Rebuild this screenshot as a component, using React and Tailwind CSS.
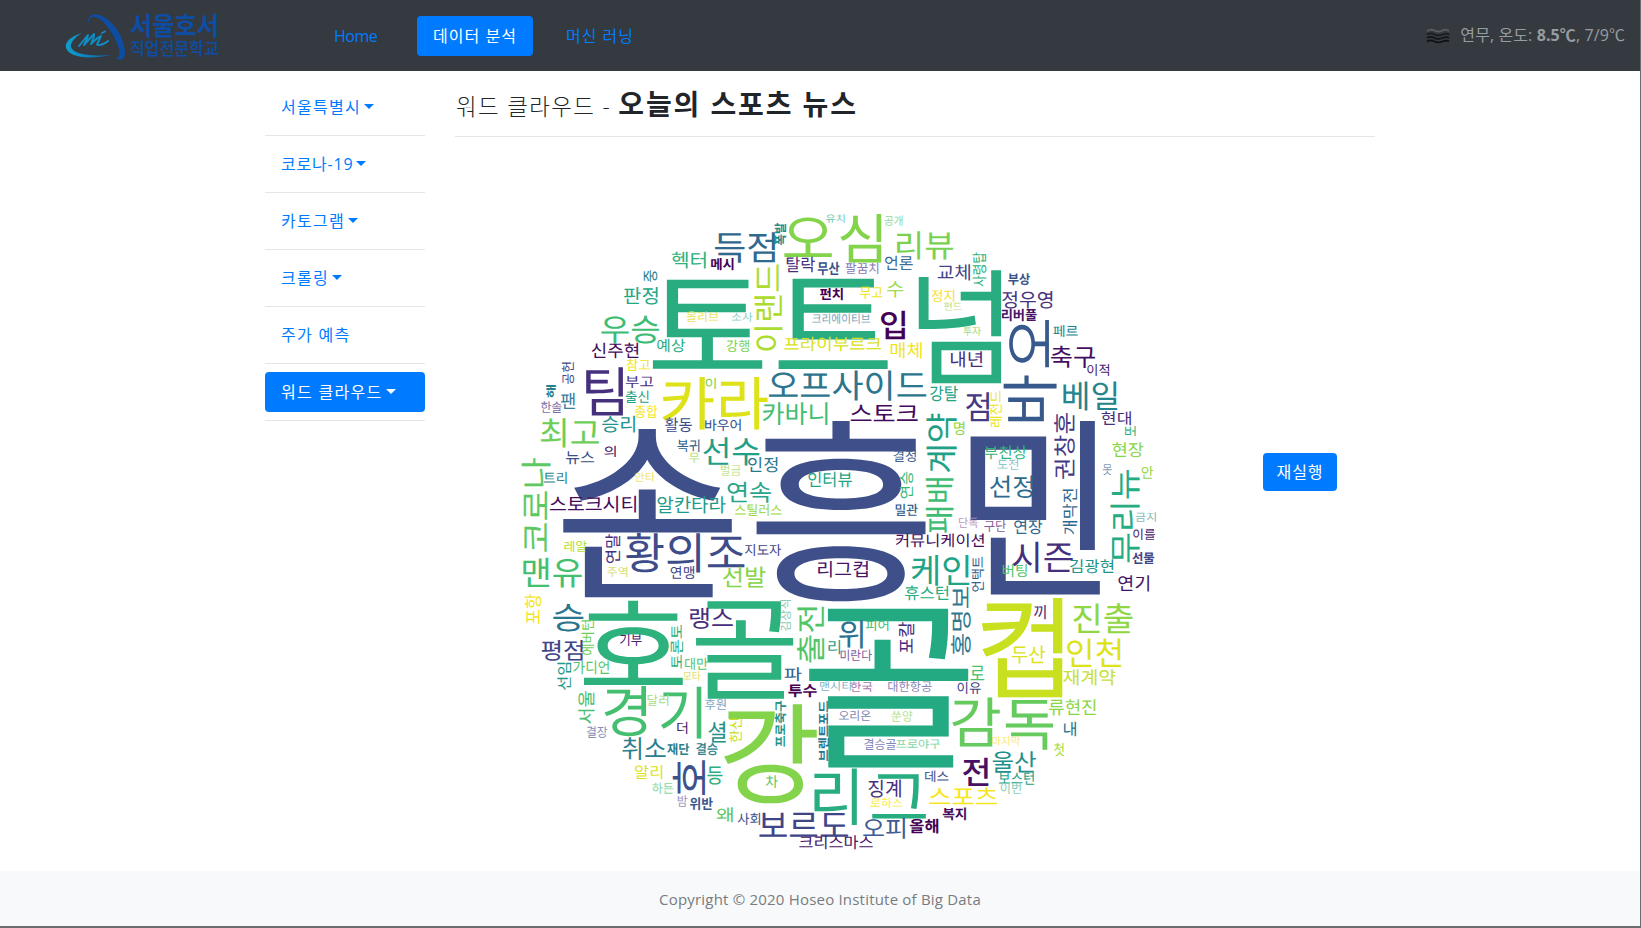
import React from "react";

const KR = '"Noto Sans CJK KR", sans-serif';

// [text, left, top, right, bottom, colour, flags]  flags: r = rotated, b = bold, m = medium
const WORDS = [
  ["손", 563.3, 427.5, 732, 597.7, "#3e4f8a"],
  ["흥", 756.5, 419, 926, 603.7, "#3e4f8a"],
  ["민", 969.3, 420, 1100, 594.7, "#3e4f8a"],
  ["토", 653, 279, 762.3, 369.3, "#29ad80"],
  ["트", 778.7, 279, 887.7, 369.3, "#29ad80"],
  ["넘", 918.3, 269, 1001.7, 384.3, "#29ad80"],
  ["호", 584, 600, 682.7, 686, "#2db27d"],
  ["골", 696, 600, 793.7, 699, "#2db27d"],
  ["골", 809, 606.7, 969, 767.7, "#24aa83"],
  ["컵", 981, 597.7, 1063, 697.7, "#c8e020"],
  ["강", 724, 704, 817.3, 804, "#84d44b"],
  ["경", 604.3, 686, 646.3, 736.7, "#44bf70"],
  ["기", 661, 686, 701.7, 739, "#44bf70"],
  ["오", 784.3, 217.3, 831.7, 257.3, "#84d44b"],
  ["심", 840, 213.3, 881.7, 263, "#84d44b"],
  ["리뷰", 897, 231, 953, 260, "#7ad151"],
  ["득점", 715, 232, 775, 263, "#31688e"],
  ["폭발", 774, 223, 786, 245, "#1f8a8c", "rb"],
  ["유치", 826, 214, 844.5, 222.7, "#74c7b0"],
  ["공개", 884.5, 215, 902.5, 225.7, "#8fd9a0"],
  ["헥터", 671.7, 251.7, 705.7, 269, "#2db27d"],
  ["메시", 711, 257.5, 733.5, 270, "#440154", "b"],
  ["중", 644, 270, 657.5, 281.7, "#2f7f8e", "r"],
  ["판정", 624, 287.3, 657.5, 305, "#23a884"],
  ["우승", 601, 315, 659, 343.3, "#3dbc74"],
  ["올리브", 686.7, 311, 718.3, 321.7, "#e8e35c"],
  ["예상", 657.3, 339, 685, 352.7, "#27ad81"],
  ["신주현", 591.7, 342.3, 638.3, 358.5, "#440a5c"],
  ["참고", 626.7, 358.3, 650, 370.7, "#f0e51d"],
  ["팀", 586, 366.7, 623.3, 416, "#46307e"],
  ["부고", 625.7, 376, 653.3, 388.5, "#472f7d"],
  ["출신", 625.7, 390.5, 648.5, 403.3, "#22a385"],
  ["종합", 635, 405, 657.5, 418.3, "#f5e626"],
  ["카", 662, 376, 713.5, 430, "#dde318"],
  ["라", 720.7, 376, 768, 430, "#dde318"],
  ["이", 705.7, 377.7, 715.7, 389, "#7ad151"],
  ["공헌", 561.7, 362.3, 574, 384, "#3f4a8a", "r"],
  ["해", 546, 385, 556, 397.7, "#26828e", "rb"],
  ["팬", 561, 392.7, 575, 409.3, "#3b7e9a"],
  ["한솔", 541, 401.7, 561.7, 413.3, "#7b6aa3"],
  ["이랜드", 754.3, 264.3, 783.3, 350.7, "#addc30", "r"],
  ["탈락", 786.7, 256.7, 815, 272.7, "#472d7b"],
  ["무산", 817.7, 261, 839.3, 275, "#3b518b", "b"],
  ["팔꿈치", 845.7, 262.3, 878.3, 274, "#8d7bb5"],
  ["언론", 885, 255.7, 912.7, 270, "#3a6d98"],
  ["수", 887.3, 281, 903.3, 297.7, "#a0da55"],
  ["펀치", 820, 288.3, 842.7, 300.7, "#440154", "b"],
  ["무고", 860, 286.7, 882.3, 299.3, "#f0e51d"],
  ["크리에이티브", 812.3, 313.3, 870, 324, "#7c9fbc"],
  ["소사", 731.7, 311.7, 752.7, 321.7, "#8fcfbf"],
  ["입", 881, 311, 905, 340, "#440154", "m"],
  ["강행", 726.7, 339.3, 749, 351.7, "#7ad151"],
  ["프라이부르크", 784.3, 336.7, 881, 351.7, "#d8e219"],
  ["매체", 890.7, 341.7, 921.7, 358.3, "#f0e51d"],
  ["오프사이드", 769, 370, 926, 401, "#2b758e"],
  ["카바니", 762.7, 401.7, 827.3, 425, "#41be71"],
  ["스토크", 850.7, 405, 917.7, 421.7, "#440a5c"],
  ["정지", 931.7, 289.3, 954.3, 302.3, "#f4e23a"],
  ["강탈", 930, 385, 957.7, 401, "#22a385"],
  ["계약", 926, 413.5, 957, 472.5, "#1fa187", "r"],
  ["명", 954, 421, 964.3, 435, "#90d743"],
  ["교체", 937.7, 264.3, 970, 281, "#414487"],
  ["사령탑", 972.7, 252.3, 986.7, 286.7, "#2db27d", "r"],
  ["부상", 1008.3, 272.7, 1030, 285, "#3a528b", "b"],
  ["정우영", 1002.3, 291, 1052.3, 309, "#463480"],
  ["리버풀", 1001.7, 308.3, 1036.7, 321, "#481467", "b"],
  ["펀드", 944, 302.3, 961.7, 311, "#c5dd80"],
  ["투자", 963.3, 326, 981, 335.7, "#a5d98a"],
  ["오", 1009, 320, 1049.3, 367.3, "#38598c", "r"],
  ["바", 1003.3, 375, 1057.7, 421.7, "#38598c", "r"],
  ["점", 966, 392.7, 989, 421.7, "#443983"],
  ["레전드", 990, 391, 1002.7, 427, "#ece51b", "r"],
  ["내년", 951, 351, 982.3, 367.7, "#46327e"],
  ["페르", 1053.3, 325, 1077.7, 337.3, "#26828e"],
  ["축구", 1051, 345, 1095, 367.7, "#440f62"],
  ["이적", 1087.3, 363.3, 1109, 375.7, "#481b6d"],
  ["베일", 1063.3, 381, 1117.3, 410.7, "#25848e"],
  ["현대", 1101.7, 410.7, 1130.7, 425, "#46307e"],
  ["권창훈", 1054, 413, 1075, 479, "#443a83", "r"],
  ["최고", 540.7, 418.3, 599, 448.3, "#6ece58"],
  ["승리", 602.3, 415.7, 635, 433, "#1f948c"],
  ["활동", 665, 417.7, 691.7, 432.7, "#3e4989"],
  ["바우어", 705, 418.7, 740.7, 431, "#31508b"],
  ["뉴스", 566, 450.7, 594, 464, "#3b5187"],
  ["의", 604.3, 445.7, 615.7, 457.3, "#471365"],
  ["복귀", 677.3, 439.3, 699.3, 452.3, "#2c5f8a"],
  ["무", 689.3, 452.3, 699.3, 462.7, "#b4e07a"],
  ["선수", 703.3, 436.7, 759.3, 465.7, "#1fa088"],
  ["안타", 635, 472.3, 655, 482.3, "#eee36a"],
  ["트리", 544, 471.7, 566.7, 484.3, "#2b7f8e"],
  ["코로나", 521, 458.3, 550.7, 551.7, "#5ec962", "r"],
  ["스토크시티", 550, 495, 636, 512.3, "#440a5c"],
  ["알칸타라", 657.3, 495.7, 725.7, 513.3, "#1e9c89"],
  ["연속", 727.5, 481, 771, 502.7, "#29a587"],
  ["벌금", 720.7, 464, 740.7, 475.7, "#c2e59a"],
  ["인정", 748.3, 456.7, 777.3, 472.3, "#2a788e"],
  ["스틸러스", 735, 503.3, 781.7, 515.7, "#9bd93c"],
  ["황의조", 626, 532.7, 744.3, 573, "#3e4c8a"],
  ["연말", 605, 534.3, 620, 563.3, "#46307e", "r"],
  ["레알", 564.3, 540.7, 586.7, 552.3, "#b5de2b"],
  ["주역", 607.3, 566.7, 627.3, 577.3, "#d8e070"],
  ["연맹", 670.7, 565.7, 694, 579, "#404688"],
  ["맨유", 523.3, 557.7, 581.7, 588.3, "#44bf70"],
  ["포항", 525, 594, 541.7, 624, "#f3e51e", "r"],
  ["승", 553.3, 603.3, 583.3, 631, "#2a768e"],
  ["에버턴", 581, 620, 594, 655, "#6ece58", "r"],
  ["랭스", 690, 607.7, 732.7, 629, "#472d7b"],
  ["토론토", 671, 625, 683.3, 668.5, "#29af7f", "r"],
  ["선발", 723, 566.7, 765.7, 588, "#86d549"],
  ["지도자", 745, 543.3, 781, 555.7, "#3f4788"],
  ["기부", 620, 634, 641.7, 646.7, "#482374"],
  ["인터뷰", 808.3, 471.7, 851.7, 487.7, "#21a585"],
  ["리그컵", 818.3, 560.7, 867.7, 577.7, "#471365"],
  ["결정", 893.3, 449.3, 915.7, 461.7, "#3f6292"],
  ["연승", 899, 471.7, 912.7, 498.3, "#37b878", "r"],
  ["밀관", 895.7, 503.3, 917.7, 515.7, "#34618d", "m"],
  ["패배", 925.7, 478.3, 954, 532.7, "#3fbc73", "r"],
  ["커뮤니케이션", 895.7, 533.3, 984, 547.5, "#450c5c"],
  ["케인", 911.7, 554.3, 969.3, 585.7, "#20a386"],
  ["휴스턴", 905, 585, 948.3, 600, "#28ae80"],
  ["김상식", 780, 600, 791, 631, "#8cc9b4", "r"],
  ["출전", 796.7, 606.7, 824.3, 662.7, "#52c569", "r"],
  ["위", 839, 620, 863, 649, "#2c728e"],
  ["피어", 865.7, 619.3, 888.3, 631, "#3fbf71"],
  ["포칼", 898, 622, 914, 653, "#472d7b", "r"],
  ["리", 828.3, 639.3, 840, 654, "#2a9d8a"],
  ["미란다", 840.7, 649, 871.7, 660.7, "#7d5c9c"],
  ["파", 784.3, 667.3, 801.7, 681.7, "#34618d"],
  ["투수", 788.3, 684, 816.7, 697.3, "#440154", "b"],
  ["맨시티", 820, 681, 851, 691, "#86b4c4"],
  ["한국", 850.7, 681, 872.3, 691.7, "#a878a8"],
  ["대한항공", 888.3, 681, 931.7, 692.3, "#8a86b8"],
  ["오리온", 839, 710, 870.7, 721, "#7e86ae"],
  ["쑨양", 891.7, 710, 912.3, 721.7, "#b5e08a"],
  ["결승골", 864.3, 738.3, 896, 750, "#7f86b8"],
  ["프로야구", 896, 739, 940, 749.3, "#7fd6a5"],
  ["프로축구", 775, 700.7, 786.7, 746.7, "#1f948c", "rb"],
  ["브렌트포드", 818.3, 701, 829.3, 761, "#2a768e", "rb"],
  ["한신", 729, 718.3, 741.7, 742.3, "#c8e020", "r"],
  ["차", 765.7, 775, 777.7, 788.3, "#5cc863"],
  ["리", 814.3, 767.7, 857.3, 825.7, "#27ad81"],
  ["그", 872.3, 773.3, 926, 818.3, "#27ad81"],
  ["징계", 868.3, 779.3, 900.7, 797.7, "#472f7d"],
  ["로하스", 870.7, 797.3, 902.3, 807.7, "#fbe94d"],
  ["데스", 925, 770, 948.3, 781.7, "#3f4f8a"],
  ["보르도", 759.3, 812.7, 848, 837.3, "#404588"],
  ["오피", 863.3, 817.7, 905, 839.3, "#3f5c94"],
  ["올해", 910, 819, 938.3, 834, "#440154", "b"],
  ["크리스마스", 799.3, 835, 872.7, 849.3, "#471567"],
  ["사회", 737.7, 812.3, 760, 825, "#3c4f8a"],
  ["왜", 716.7, 807.3, 732.7, 822.7, "#5ec962"],
  ["부친상", 984.3, 445, 1026.7, 459, "#2fb47c"],
  ["도전", 997.7, 459, 1018.3, 470, "#8ac5c8"],
  ["선정", 990, 475, 1032.7, 497.7, "#2f6b8e"],
  ["개막전", 1062.7, 489, 1077.7, 534.3, "#31688e", "r"],
  ["또", 1125, 426, 1135.7, 436, "#2db27d", "r"],
  ["현장", 1112.7, 442.3, 1143.3, 457.7, "#86d549"],
  ["못", 1102.7, 464.3, 1111.7, 475, "#8a9bbb"],
  ["안", 1141.7, 466, 1153.3, 479, "#90d743"],
  ["무리뉴", 1110, 470, 1140, 562.7, "#25ac82", "r"],
  ["금지", 1135.7, 511.7, 1155.7, 521.7, "#86b8b8"],
  ["이를", 1133.3, 528.3, 1155, 540, "#481b6d"],
  ["선물", 1132.3, 551.7, 1154.3, 564, "#414487", "b"],
  ["연기", 1118.3, 575, 1149, 591.7, "#471365"],
  ["김광현", 1070, 559, 1113.3, 573.3, "#1f948c"],
  ["시즌", 1012.3, 541.7, 1072.7, 572.7, "#46307e"],
  ["연장", 1014.3, 519, 1042.3, 534, "#31688e"],
  ["구단", 984.3, 520, 1006, 532.3, "#8c5a95"],
  ["단독", 959, 517.3, 977.7, 528.3, "#b795bb"],
  ["버팅", 1002.7, 564.3, 1026.7, 577.7, "#52c569"],
  ["언택트", 971, 556.7, 984, 591.7, "#34618d", "r"],
  ["홍명보", 951, 587, 971, 655, "#31788e", "r"],
  ["끼", 1034, 604.3, 1045.7, 619, "#482878"],
  ["진출", 1073.3, 602.7, 1132.7, 633.3, "#90d743"],
  ["인천", 1067.3, 638.3, 1121, 667.3, "#dde318"],
  ["두산", 1011.7, 645.7, 1045, 664, "#dde318"],
  ["재계약", 1063.3, 669, 1115.7, 685.7, "#c5e03c"],
  ["류현진", 1049, 699.3, 1095.7, 716, "#8bd646"],
  ["내", 1064, 721.7, 1076, 736.7, "#2a788e"],
  ["첫", 1054, 742.3, 1064, 755.7, "#a5db36"],
  ["감", 951.7, 697.3, 1000, 747.3, "#65cb5e"],
  ["독", 1006, 699.3, 1053.3, 750, "#65cb5e"],
  ["마지막", 992.3, 736, 1020, 746, "#fbe77a"],
  ["로", 970.7, 666, 984.3, 680.7, "#4ac16d"],
  ["이유", 957.7, 681.7, 980.7, 694.3, "#404688"],
  ["전", 962.7, 757.3, 988.3, 786, "#471063", "m"],
  ["울산", 992.7, 751, 1036, 772.7, "#22918c"],
  ["보스턴", 999, 771.7, 1034, 785, "#1fa187"],
  ["이번", 1000.7, 781.7, 1021, 794, "#8ad0b8"],
  ["스포츠", 929.3, 786.7, 997.3, 804, "#f5e61f"],
  ["복지", 942.7, 807.7, 966, 820.7, "#440a5c", "b"],
  ["평점", 541.7, 640, 582.7, 661, "#414487"],
  ["선임", 556.7, 662.7, 570.7, 690, "#1f9a8a", "r"],
  ["가디언", 573.3, 660, 609, 674, "#54c568"],
  ["서울", 577.7, 691, 594.3, 724, "#47c06f", "r"],
  ["결장", 586.7, 725.7, 607.3, 737.7, "#8590b8"],
  ["달러", 647.7, 694.3, 668.3, 706, "#a5dc7f"],
  ["더", 677.3, 721.7, 687.3, 734.3, "#471b6d"],
  ["대만", 685, 657.3, 707.7, 670, "#54c568"],
  ["모타", 683.3, 670.7, 700.7, 680.7, "#e0e070"],
  ["후원", 705, 698.3, 726, 710, "#7fa5be"],
  ["셜", 708.3, 721, 725.7, 742.3, "#22908c"],
  ["취소", 622.3, 736.7, 665.7, 760, "#2b808e"],
  ["재단", 667.3, 742.7, 689.3, 755, "#2a818e", "b"],
  ["결승", 696, 742.3, 717.7, 755, "#2b808e", "m"],
  ["알리", 635, 764.3, 662.3, 779, "#dde318"],
  ["하든", 652.3, 782.7, 673.3, 794.3, "#7fd6a0"],
  ["호", 672.3, 760, 705, 795, "#3b528b", "r"],
  ["등", 707.3, 766.7, 722.3, 785, "#28ae80"],
  ["밤", 677.7, 795, 687.3, 806.7, "#9a93bf"],
  ["위반", 690, 796.7, 712.7, 810, "#3a5a8c", "b"],
];

let ctx;
function inkBox(text, weight) {
  ctx = ctx || document.createElement("canvas").getContext("2d");
  ctx.font = `${weight} 100px ${KR}`;
  const m = ctx.measureText(text);
  return {
    l: -m.actualBoundingBoxLeft,
    r: m.actualBoundingBoxRight,
    t: -m.actualBoundingBoxAscent,
    b: m.actualBoundingBoxDescent,
  };
}

function Word({ word }) {
  const [text, x0, y0, x1, y1, color, flags = ""] = word;
  const weight = flags.includes("b") ? 700 : flags.includes("m") ? 500 : 400;
  const k = inkBox(text, weight);
  const w = k.r - k.l;
  const h = k.b - k.t;
  const transform = flags.includes("r")
    ? `translate(${x0} ${y1}) rotate(-90) scale(${(y1 - y0) / w} ${(x1 - x0) / h}) translate(${-k.l} ${-k.t})`
    : `translate(${x0} ${y0}) scale(${(x1 - x0) / w} ${(y1 - y0) / h}) translate(${-k.l} ${-k.t})`;
  return (
    <text transform={transform} fill={color} fontSize="100" fontWeight={weight} fontFamily={KR}>
      {text}
    </text>
  );
}

function WordCloud() {
  return (
    <svg className="block h-[650px] w-[645px] overflow-visible" viewBox="515 205 645 650" textRendering="geometricPrecision">
      {WORDS.map((w, i) => (
        <Word key={i} word={w} />
      ))}
    </svg>
  );
}

function Logo() {
  return (
    <svg className="h-[50px] w-[156px] overflow-visible" viewBox="64 10 156 50">
      <defs>
        <linearGradient id="swoosh" x1="0" x2="1">
          <stop offset="0" stopColor="#0f9fd0" />
          <stop offset="1" stopColor="#0e5fa8" />
        </linearGradient>
      </defs>
      <path d="M88.500 25C86 17 92 12 101 15.500C114 21 125 39 125 53C125 59 121 61 116 58.500C120 57.500 120 52 118 46C114 34 105 21 97 17.500C91 15.500 88 18 88.500 25Z" fill="#0d4da3" />
      <path d="M82 33C71 36 65 42 66 47.500C68 56 84 60.500 112 55C97 56 74 56 71 47C70 43 75 37 82 33Z" fill="url(#swoosh)" />
      <path d="M79 46L88 35C88 38 85 42 84 45L94 34C95 36 92 41 91 44C95 40 98 37 101 36L97 44.500C99 46 104 44 108 41M102 33L105 31.500" fill="none" stroke="#0f8cc4" strokeWidth="1.900" strokeLinejoin="round" strokeLinecap="round" />
      <text x="130" y="34.500" textLength="89" lengthAdjust="spacingAndGlyphs" fontSize="25" fontWeight="700" fontFamily={KR} fill="#0d4da3">서울호서</text>
      <text x="130" y="54.500" textLength="89" lengthAdjust="spacingAndGlyphs" fontSize="17" fontWeight="500" fontFamily={KR} fill="#0d4da3">직업전문학교</text>
    </svg>
  );
}

function HazeIcon() {
  return (
    <svg className="h-[16px] w-[24px]" viewBox="0 0 24 16" fill="none" strokeWidth="1.800">
      <path d="M1 3C4 1 6 1 8.500 2.500S14 4 16.500 2.500S21 1.500 23 3" stroke="#5d5d60" />
      <path d="M1 6.500C4 4.500 6 5 8.500 6.500S14 7.500 16.500 6.500S21 5 23 6.500" stroke="#1b1c1e" />
      <path d="M1 10C4 8 6 8.500 8.500 10S14 11 16.500 10S21 8.500 23 10" stroke="#141516" />
      <path d="M1 13.500C4 11.500 6 12 8.500 13.500S14 14.500 16.500 13.500S21 12 23 13.500" stroke="#101112" />
    </svg>
  );
}

const MENU = [
  ["서울특별시", true],
  ["코로나-19", true],
  ["카토그램", true],
  ["크롤링", true],
  ["주가 예측", false],
  ["워드 클라우드", true, true],
];

function Caret() {
  return <span className="mb-px ml-[3px] border-x-[5px] border-t-[5px] border-x-transparent border-t-current" />;
}

export default function App() {
  return (
    <div className="flex h-[928px] w-[1641px] flex-col overflow-hidden border-r border-b-2 border-[#6b6d70] bg-white font-['Open_Sans','Noto_Sans_CJK_KR',sans-serif] text-base text-[#212529]">
      <header className="flex h-[71px] shrink-0 items-center bg-[#343a40]">
        <div className="ml-[64px] -mt-px">
          <Logo />
        </div>
        <nav className="ml-[98px] flex items-center text-[#007bff]">
          <a className="flex h-10 w-[99px] items-center px-4 tracking-[-0.5px]">Home</a>
          <a className="flex h-10 w-[116px] items-center justify-center rounded bg-[#007bff] tracking-[1px] text-white whitespace-nowrap">데이터 분석</a>
          <a className="ml-[17px] flex h-10 items-center px-4 tracking-[1px] whitespace-nowrap">머신 러닝</a>
        </nav>
        <div className="mr-[15px] ml-auto flex items-center text-[#999c9f]">
          <HazeIcon />
          <span className="-mt-[2px] ml-[10px] text-[16px] tracking-[0.1px] whitespace-nowrap">
            연무, 온도: <b>8.5℃</b>, 7/9℃
          </span>
        </div>
      </header>

      <div className="flex h-[800px] shrink-0">
        <aside className="ml-[265px] w-[160px] pt-4">
          {MENU.map(([label, caret, active]) => (
            <div key={label} className="mb-2 border-b border-[#e5e5e5] pb-2">
              <a
                className={
                  active
                    ? "flex h-10 items-center rounded bg-[#007bff] px-4 tracking-[1.3px] whitespace-nowrap text-white"
                    : label === "코로나-19"
                      ? "flex h-10 items-center px-4 tracking-[0.8px] whitespace-nowrap text-[#007bff]"
                      : "flex h-10 items-center px-4 tracking-[1.3px] whitespace-nowrap text-[#007bff]"
                }
              >
                {label}
                {caret && <Caret />}
              </a>
            </div>
          ))}
        </aside>

        <main className="ml-[30px] w-[920px]">
          <h3 className="flex h-[66px] items-baseline border-b border-[#e5e5e5] pt-[12px] leading-[42px] whitespace-nowrap">
            <span className="ml-px text-[22.4px] font-light tracking-[1.4px]">워드 클라우드 -&nbsp;</span>
            <b className="text-[28px] tracking-[1.9px]">오늘의 스포츠 뉴스</b>
          </h3>
          <div className="flex items-start">
            <div className="ml-[60px] pt-[68px]">
              <WordCloud />
            </div>
            <button className="mt-[316px] ml-[103px] h-[38px] w-[74px] rounded bg-[#007bff] tracking-[1px] text-white">재실행</button>
          </div>
        </main>
      </div>

      <footer className="flex flex-1 items-center justify-center bg-[#f8f9fa] pt-[2px] text-[#777c81]">
        <span className="text-[15px] tracking-[0.2px]">Copyright © 2020 Hoseo Institute of Big Data</span>
      </footer>
    </div>
  );
}
